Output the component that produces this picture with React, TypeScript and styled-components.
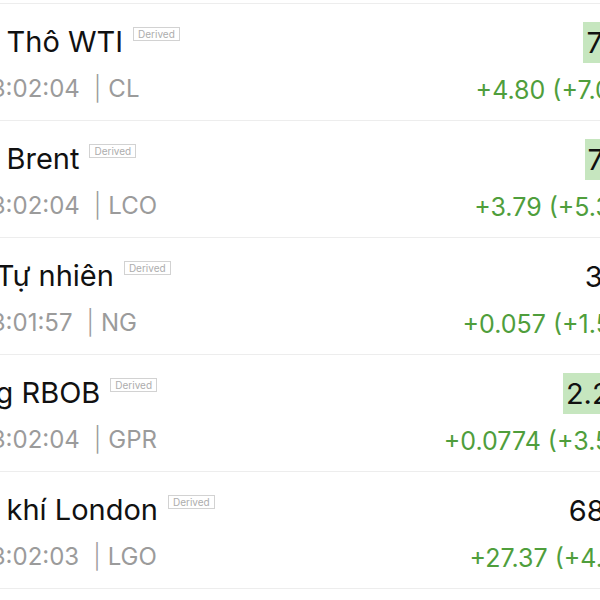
import React from "react";
import styled, { createGlobalStyle } from "styled-components";
import { Clock } from "lucide-react";

const GlobalStyle = createGlobalStyle`
  html, body {
    margin: 0;
    padding: 0;
    background: #ffffff;
    overflow: hidden;
  }
  body {
    font-family: Inter, "Liberation Sans", sans-serif;
    -webkit-font-smoothing: antialiased;
  }
`;

type Quote = {
  name: string;
  time: string;
  code: string;
  price: string;
  change: string;
  flash: boolean;
};

const quotes: Quote[] = [
  { name: "Dầu Thô WTI", time: "13:02:04", code: "CL", price: "72.53", change: "+4.80 (+7.09%)", flash: true },
  { name: "Dầu Brent", time: "13:02:04", code: "LCO", price: "74.06", change: "+3.79 (+5.39%)", flash: true },
  { name: "Khí Tự nhiên", time: "13:01:57", code: "NG", price: "3.645", change: "+0.057 (+1.59%)", flash: false },
  { name: "Xăng RBOB", time: "13:02:04", code: "GPR", price: "2.2654", change: "+0.0774 (+3.54%)", flash: true },
  { name: "Dầu khí London", time: "13:02:03", code: "LGO", price: "682.75", change: "+27.37 (+4.18%)", flash: false },
];

const List = styled.div`
  width: 720px;
  margin: 3px 0 0 -56px;
`;

const Row = styled.div`
  display: flex;
  justify-content: space-between;
  align-items: stretch;
  height: 116px;
  border-top: 1px solid #ededed;
`;

const Left = styled.div`
  display: flex;
  flex-direction: column;
  padding-top: 20px;
`;

const Right = styled.div`
  display: flex;
  flex-direction: column;
  align-items: flex-end;
  padding-top: 18px;
`;

const NameLine = styled.div`
  display: flex;
  align-items: flex-start;
  gap: 10px;
  height: 36px;
`;

const Name = styled.span`
  font-size: 29px;
  line-height: 36px;
  color: #111111;
  white-space: nowrap;
`;

const Badge = styled.span`
  margin-top: 3px;
  padding: 0 4px;
  border: 1px solid #d2d2d2;
  font-size: 10px;
  line-height: 12px;
  color: #adadad;
`;

const TimeLine = styled.div`
  display: flex;
  align-items: center;
  margin-top: 14px;
  font-size: 24px;
  line-height: 30px;
  color: #9b9b9b;
  white-space: nowrap;

  svg {
    margin-right: 17px;
  }
`;

const Sep = styled.span`
  margin: 0 7px 0 14px;
  font-weight: 300;
`;

const Price = styled.span<{ $flash: boolean }>`
  margin-right: -3px;
  padding: 0 3px;
  font-size: 29px;
  line-height: 41px;
  color: #111111;
  background: ${({ $flash }) => ($flash ? "#c6e6bf" : "transparent")};
`;

const Change = styled.span`
  margin-top: 12px;
  margin-right: 4px;
  font-size: 25px;
  line-height: 30px;
  color: #4f9e3c;
  white-space: nowrap;
`;

const QuoteRow = ({ q }: { q: Quote }) => (
  <Row>
    <Left>
      <NameLine>
        <Name>{q.name}</Name>
        <Badge>Derived</Badge>
      </NameLine>
      <TimeLine>
        <Clock size={20} strokeWidth={2} />
        {q.time}
        <Sep>|</Sep>
        {q.code}
      </TimeLine>
    </Left>
    <Right>
      <Price $flash={q.flash}>{q.price}</Price>
      <Change>{q.change}</Change>
    </Right>
  </Row>
);

const App = () => (
  <>
    <GlobalStyle />
    <List>
      {quotes.map((q) => (
        <QuoteRow key={q.name} q={q} />
      ))}
      <Row />
    </List>
  </>
);

export default App;
